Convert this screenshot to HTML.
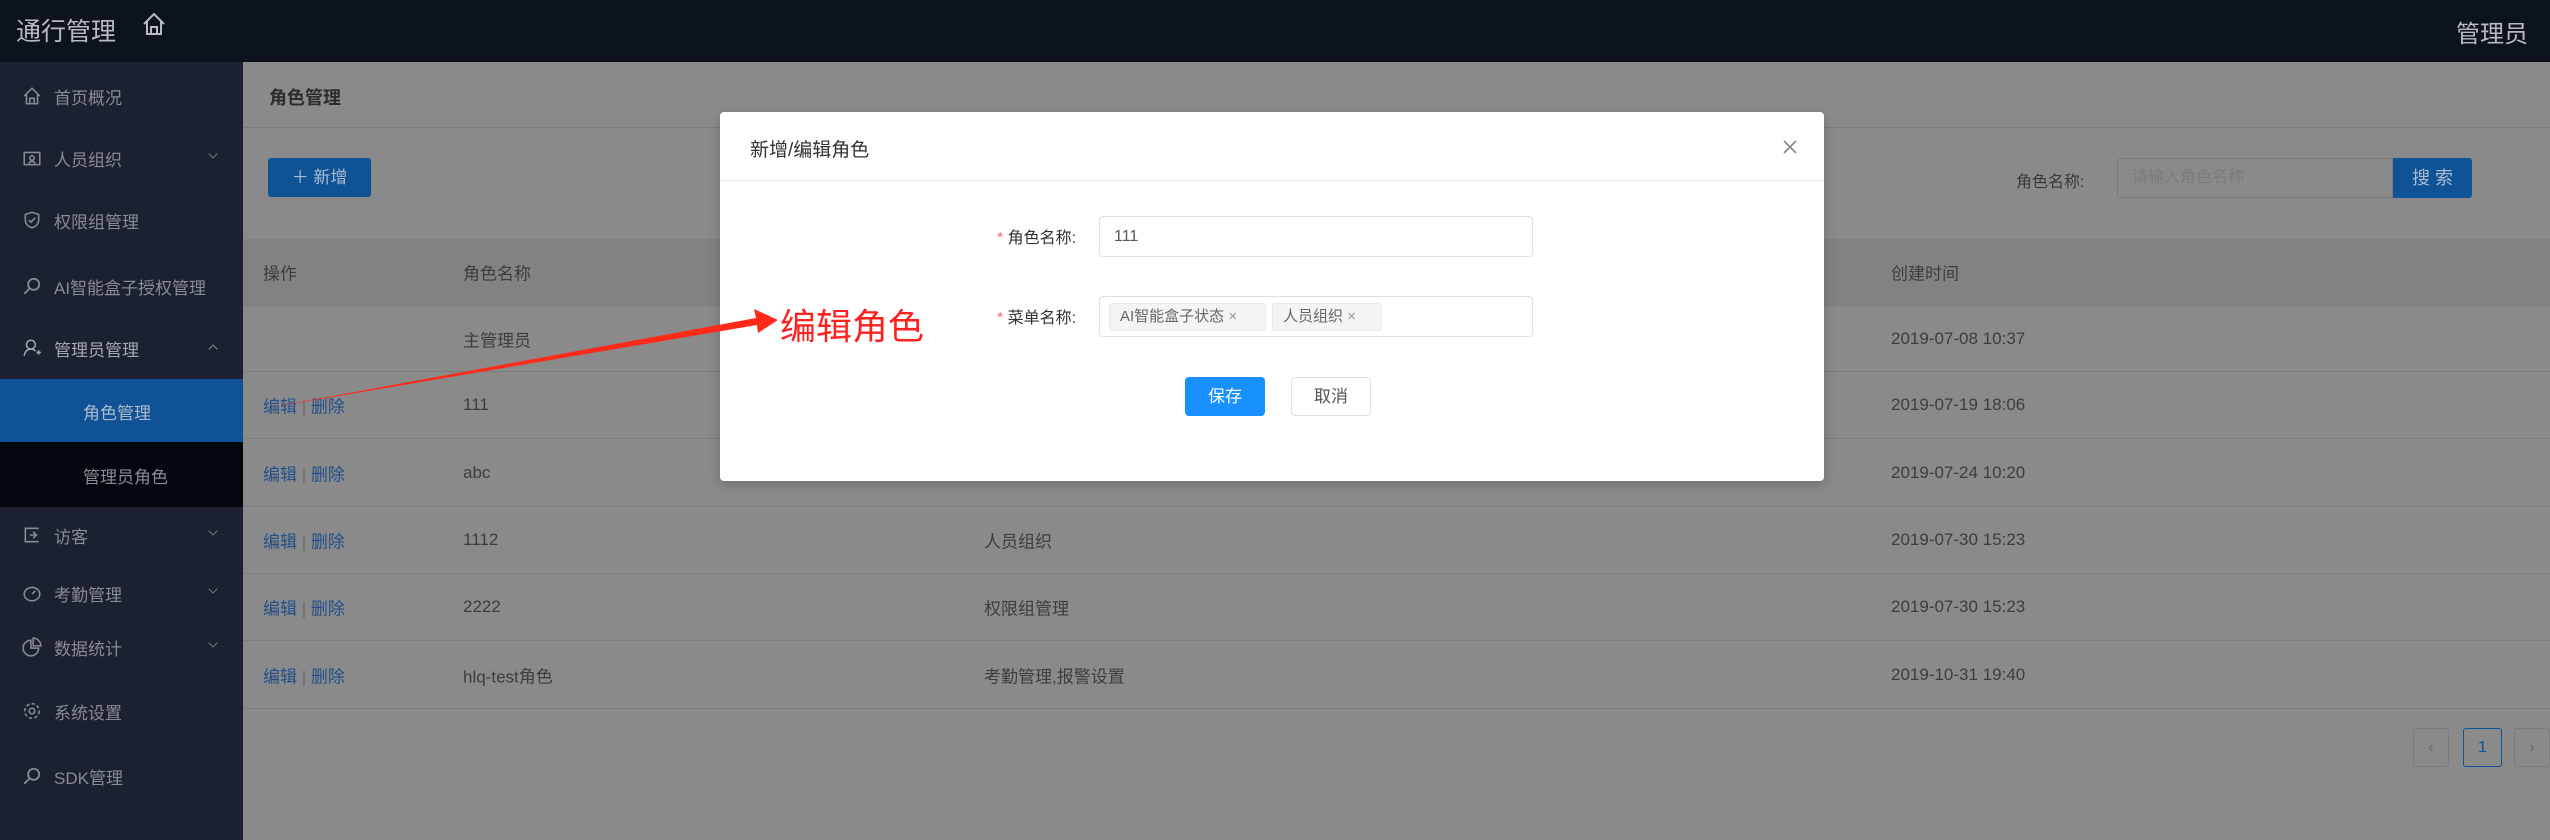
<!DOCTYPE html>
<html><head><meta charset="utf-8">
<style>
*{margin:0;padding:0;box-sizing:border-box}
body{width:2550px;height:840px;overflow:hidden;position:relative;background:#8a8a8a;font-family:"Liberation Sans","Noto Sans CJK SC",sans-serif;}
.top{position:absolute;left:0;top:0;width:2550px;height:62px;background:#0c131d;}
.top .t{position:absolute;left:16px;top:12px;font-size:25px;color:#b7bbc1;}
.top .u{position:absolute;right:22px;top:14px;font-size:24px;color:#b7bbc1;}
.side{position:absolute;left:0;top:62px;width:243px;height:778px;background:#1b2130;}
.it{position:absolute;left:0;width:243px;font-size:17px;color:#878b93;}
.it .ic{position:absolute;left:22px;top:-10px;width:20px;height:20px;}
.it .tx{position:absolute;left:54px;top:-12px;white-space:nowrap}
.it .ar{position:absolute;left:209px;top:-8px;width:8px;height:8px;border-right:1.5px solid #878b93;border-bottom:1.5px solid #878b93;transform:rotate(45deg) scale(.8)}
.main{position:absolute;left:243px;top:62px;right:0;bottom:0;}
.hdr{position:absolute;left:0;top:0;right:0;height:66px;border-bottom:1px solid #7c7c7c;}
.row{position:absolute;left:243px;right:0;border-bottom:1px solid #7d7d7d;font-size:17px;color:#3d3d3d}
.row span{position:absolute;top:50%;transform:translateY(-50%);white-space:nowrap}
.lk{color:#23508a;font-weight:normal}
.sep{color:#6a6a6a;font-style:normal}
.modal{position:absolute;left:720px;top:112px;width:1104px;height:369px;background:#fff;border-radius:4px;box-shadow:0 4px 12px rgba(0,0,0,.2)}
.in{position:absolute;border:1px solid #dcdfe6;border-radius:4px;background:#fff}
.tag{position:absolute;top:6px;height:28px;background:#f4f4f5;border:1px solid #e9e9eb;border-radius:3px;font-size:15px;color:#666;line-height:26px;padding-left:10px}
</style></head><body>
<div class="top"><span class="t">通行管理</span>
<svg style="position:absolute;left:141px;top:11px" width="26" height="26" viewBox="0 0 26 26" fill="none" stroke="#b7bbc1" stroke-width="2"><path d="M3 13 L13 3 L23 13 M6 10 V23 H20 V10 M10 23 V16 H16 V23"/></svg>
<span class="u">管理员</span></div>

<div class="side">
<div class="it" style="top:34px"><svg class="ic" viewBox="0 0 18 18" fill="none" stroke="#878b93" stroke-width="1.4"><path d="M2 9 L9 2 L16 9 M4 7 V16 H14 V7 M7 16 V11 H11 V16"/></svg><span class="tx">首页概况</span></div>
<div class="it" style="top:96px"><svg class="ic" viewBox="0 0 18 18" fill="none" stroke="#878b93" stroke-width="1.4"><rect x="2" y="4" width="14" height="11"/><circle cx="9" cy="9" r="2"/><path d="M6 14 Q9 10 12 14"/></svg><span class="tx">人员组织</span><i class="ar"></i></div>
<div class="it" style="top:158px"><svg class="ic" viewBox="0 0 18 18" fill="none" stroke="#878b93" stroke-width="1.4"><path d="M9 2 L15 4 V9 Q15 14 9 16 Q3 14 3 9 V4 Z M6 9 L8 11 L12 7"/></svg><span class="tx">权限组管理</span></div>
<div class="it" style="top:224px"><svg class="ic" viewBox="0 0 18 18" fill="none" stroke="#878b93" stroke-width="1.6"><circle cx="10.5" cy="7.5" r="5"/><path d="M7 11 L2 16"/></svg><span class="tx">AI智能盒子授权管理</span></div>
<div class="it" style="top:286px;color:#a3a7ae"><svg class="ic" viewBox="0 0 18 18" fill="none" stroke="#a3a7ae" stroke-width="1.4"><circle cx="8" cy="6" r="4"/><path d="M2 16 Q3 10 8 10 Q11 10 12 12 M13 13 H17 M15 11 V15"/></svg><span class="tx">管理员管理</span><i class="ar" style="transform:rotate(225deg) scale(.8);top:-3px;border-color:#a3a7ae"></i></div>
<div style="position:absolute;left:0;top:317px;width:243px;height:63px;background:#0f5296"></div>
<div class="it" style="top:349px;color:#a9b9cc"><span class="tx" style="left:83px">角色管理</span></div>
<div style="position:absolute;left:0;top:380px;width:243px;height:65px;background:#02070d"></div>
<div class="it" style="top:413px"><span class="tx" style="left:83px">管理员角色</span></div>
<div class="it" style="top:473px"><svg class="ic" viewBox="0 0 18 18" fill="none" stroke="#878b93" stroke-width="1.4"><path d="M15 3 H3 V15 H15 M7 9 H13 M10 6 L13 9 L10 12"/></svg><span class="tx">访客</span><i class="ar"></i></div>
<div class="it" style="top:531px"><svg class="ic" viewBox="0 0 18 18" fill="none" stroke="#878b93" stroke-width="1.4"><ellipse cx="9" cy="10" rx="7" ry="6"/><path d="M9 10 L12 7"/></svg><span class="tx">考勤管理</span><i class="ar"></i></div>
<div class="it" style="top:585px"><svg class="ic" viewBox="0 0 18 18" fill="none" stroke="#878b93" stroke-width="1.4"><path d="M8 3 A7 7 0 1 0 15 10 H8 Z M10 1 A7 7 0 0 1 17 8 H10 Z"/></svg><span class="tx">数据统计</span><i class="ar"></i></div>
<div class="it" style="top:649px"><svg class="ic" viewBox="0 0 18 18" fill="none" stroke="#878b93" stroke-width="1.4"><circle cx="9" cy="9" r="2.5"/><circle cx="9" cy="9" r="6.5" stroke-dasharray="3 2"/></svg><span class="tx">系统设置</span></div>
<div class="it" style="top:714px"><svg class="ic" viewBox="0 0 18 18" fill="none" stroke="#878b93" stroke-width="1.6"><circle cx="10.5" cy="7.5" r="5"/><path d="M7 11 L2 16"/></svg><span class="tx">SDK管理</span></div>
</div>

<div class="main">
<div class="hdr"><span style="position:absolute;left:26px;top:22px;font-size:18px;font-weight:bold;color:#2c2c2c">角色管理</span></div>
<div style="position:absolute;left:25px;top:96px;width:103px;height:39px;background:#0f5296;border-radius:3px;color:#a8bdd4;font-size:17px;line-height:39px;text-align:center">＋ 新增</div>
<span style="position:absolute;left:1773px;top:106px;font-size:16px;color:#3a3a3a">角色名称:</span>
<div style="position:absolute;left:1874px;top:96px;width:276px;height:40px;background:#8a8a8a;border:1px solid #7a7a7a;border-radius:3px 0 0 3px;font-size:16px;color:#7a7a7a;line-height:38px;padding-left:14px">请输入角色名称</div>
<div style="position:absolute;left:2150px;top:96px;width:79px;height:40px;background:#0f5296;border-radius:0 3px 3px 0;color:#a8bdd4;font-size:18px;line-height:40px;text-align:center">搜 索</div>
</div>

<div class="row" style="top:239px;height:67px;background:#828282;"><span style="left:20px">操作</span><span style="left:220px">角色名称</span><span style="left:1648px">创建时间</span></div>
<div class="row" style="top:306px;height:66px"><span style="left:220px">主管理员</span><span style="left:1648px">2019-07-08 10:37</span></div>
<div class="row" style="top:372px;height:67px"><span style="left:20px"><b class="lk">编辑</b> <i class="sep">|</i> <b class="lk">删除</b></span><span style="left:220px">111</span><span style="left:1648px">2019-07-19 18:06</span></div>
<div class="row" style="top:439px;height:68px"><span style="left:20px"><b class="lk">编辑</b> <i class="sep">|</i> <b class="lk">删除</b></span><span style="left:220px">abc</span><span style="left:1648px">2019-07-24 10:20</span></div>
<div class="row" style="top:507px;height:67px"><span style="left:20px"><b class="lk">编辑</b> <i class="sep">|</i> <b class="lk">删除</b></span><span style="left:220px">1112</span><span style="left:741px">人员组织</span><span style="left:1648px">2019-07-30 15:23</span></div>
<div class="row" style="top:574px;height:67px"><span style="left:20px"><b class="lk">编辑</b> <i class="sep">|</i> <b class="lk">删除</b></span><span style="left:220px">2222</span><span style="left:741px">权限组管理</span><span style="left:1648px">2019-07-30 15:23</span></div>
<div class="row" style="top:641px;height:68px"><span style="left:20px"><b class="lk">编辑</b> <i class="sep">|</i> <b class="lk">删除</b></span><span style="left:220px">hlq-test角色</span><span style="left:741px">考勤管理,报警设置</span><span style="left:1648px">2019-10-31 19:40</span></div>

<div style="position:absolute;left:2413px;top:728px;width:36px;height:39px;border:1px solid #7a7a7a;border-radius:3px;color:#666;text-align:center;line-height:37px">‹</div>
<div style="position:absolute;left:2463px;top:728px;width:39px;height:39px;border:1px solid #0f5296;border-radius:3px;color:#0f5296;text-align:center;line-height:37px;font-size:16px">1</div>
<div style="position:absolute;left:2514px;top:728px;width:36px;height:39px;border:1px solid #7a7a7a;border-radius:3px;color:#666;text-align:center;line-height:37px">›</div>

<div class="modal">
<span style="position:absolute;left:30px;top:23px;font-size:19px;color:#333">新增/编辑角色</span>
<svg style="position:absolute;left:1062px;top:27px" width="16" height="16" viewBox="0 0 16 16" stroke="#888" stroke-width="1.6"><path d="M2 2 L14 14 M14 2 L2 14"/></svg>
<div style="position:absolute;left:0;top:68px;width:100%;height:1px;background:#e8e8e8"></div>
<span style="position:absolute;left:277px;top:112px;font-size:16px;color:#333"><i style="color:#f56c6c;font-style:normal">*</i> 角色名称:</span>
<div class="in" style="left:379px;top:104px;width:434px;height:41px;font-size:16px;color:#555;line-height:39px;padding-left:14px">111</div>
<span style="position:absolute;left:277px;top:192px;font-size:16px;color:#333"><i style="color:#f56c6c;font-style:normal">*</i> 菜单名称:</span>
<div class="in" style="left:379px;top:184px;width:434px;height:41px">
<div class="tag" style="left:9px;width:157px">AI智能盒子状态 <span style="color:#999">×</span></div>
<div class="tag" style="left:172px;width:110px">人员组织 <span style="color:#999">×</span></div>
</div>
<div style="position:absolute;left:465px;top:265px;width:80px;height:39px;background:#1890ff;border-radius:4px;color:#fff;font-size:17px;line-height:39px;text-align:center">保存</div>
<div style="position:absolute;left:571px;top:265px;width:80px;height:39px;background:#fff;border:1px solid #dcdfe6;border-radius:4px;color:#555;font-size:17px;line-height:37px;text-align:center">取消</div>
</div>

<span style="position:absolute;left:780px;top:298px;font-size:36px;color:#ff2020;white-space:nowrap">编辑角色</span>
<svg style="position:absolute;left:0;top:0" width="2550" height="840"><polygon points="268,408 756,318 754,309 778,320 758,333 757,325" fill="#ff2a1a"/></svg>
</body></html>
